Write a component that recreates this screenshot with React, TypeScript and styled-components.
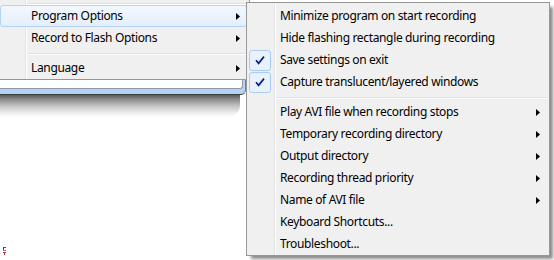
import React from 'react';
import styled, { createGlobalStyle } from 'styled-components';

interface MenuEntry {
  label?: string;
  checked?: boolean;
  sub?: boolean;
  separator?: boolean;
  active?: boolean;
}

const MAIN_MENU: MenuEntry[] = [
  { separator: true },
  { label: 'Program Options', sub: true, active: true },
  { label: 'Record to Flash Options', sub: true },
  { separator: true },
  { label: 'Language', sub: true },
];

const OPTIONS_MENU: MenuEntry[] = [
  { label: 'Minimize program on start recording' },
  { label: 'Hide flashing rectangle during recording' },
  { label: 'Save settings on exit', checked: true },
  { label: 'Capture translucent/layered windows', checked: true },
  { separator: true },
  { label: 'Play AVI file when recording stops', sub: true },
  { label: 'Temporary recording directory', sub: true },
  { label: 'Output directory', sub: true },
  { label: 'Recording thread priority', sub: true },
  { label: 'Name of AVI file', sub: true },
  { label: 'Keyboard Shortcuts...' },
  { label: 'Troubleshoot...' },
];

const MenuList = ({ items, compactFirst }: { items: MenuEntry[]; compactFirst?: boolean }) => (
  <>
    {items.map((item, i) =>
      item.separator ? (
        <Separator key={i} $compact={compactFirst && i === 0} />
      ) : (
        <Row key={i} $active={item.active}>
          <CheckSlot>
            {item.checked && (
              <CheckBox>
                <svg width="22" height="21" viewBox="0 0 22 21">
                  <path d="M7 10.2 L9.6 13.4 L15 6.6" fill="none" stroke="#0d1f8f" strokeWidth="1.7" />
                </svg>
              </CheckBox>
            )}
          </CheckSlot>
          <Label>{item.label}</Label>
          {item.sub && (
            <Arrow width="4" height="7" viewBox="0 0 4 7">
              <polygon points="0,0 4,3.5 0,7" fill="#000" />
            </Arrow>
          )}
        </Row>
      ),
    )}
  </>
);

const App = () => {
  return (
    <Stage>
      <GlobalStyle />
      <BackWindow>
        <WhitePane />
      </BackWindow>
      <WindowShadow />
      <Glyph width="4" height="9" viewBox="0 0 4 9">
        <rect x="0" y="0" width="3" height="1" fill="#3b4a8c" />
        <rect x="0" y="1" width="1" height="2" fill="#3b4a8c" />
        <rect x="0" y="3" width="3" height="1" fill="#6d7bb0" />
        <rect x="0" y="5" width="3" height="1" fill="#c03030" />
        <rect x="1" y="6" width="1" height="2" fill="#c03030" />
      </Glyph>

      <MainMenu>
        <MenuList items={MAIN_MENU} compactFirst />
      </MainMenu>

      <SubMenu>
        <MenuList items={OPTIONS_MENU} />
      </SubMenu>
    </Stage>
  );
};

export default App;

const GlobalStyle = createGlobalStyle`
  html, body {
    margin: 0;
    padding: 0;
    background: #fff;
  }
  body {
    font-family: "Noto Sans", "Liberation Sans", sans-serif;
  }
`;

const Stage = styled.div`
  position: relative;
  width: 554px;
  height: 260px;
  overflow: hidden;
  background: #fff;
`;

const BackWindow = styled.div`
  box-sizing: border-box;
  width: 246px;
  height: 95px;
  background: linear-gradient(to bottom, #c9dff4, #b4d2ef);
  border-bottom: 1px solid #3c3f44;
  border-right: 1px solid #6d7f94;
  border-radius: 0 0 5px 0;
`;

const WhitePane = styled.div`
  box-sizing: border-box;
  width: 243px;
  height: 89px;
  background: #fff;
  border-right: 1px solid #8f9aa6;
  border-bottom: 1px solid #8f9aa6;
  border-radius: 0 0 3px 0;
`;

const WindowShadow = styled.div`
  width: 240px;
  height: 22px;
  background-image: linear-gradient(
    to bottom,
    #5a5a5a 0%,
    #8c8c8c 20%,
    #c4c4c4 50%,
    #ececec 80%,
    #ffffff 100%
  );
  border-radius: 0 0 12px 0;
`;

const Glyph = styled.svg`
  display: block;
  margin: 130px 0 0 3px;
`;

const MenuBox = styled.div`
  position: absolute;
  box-sizing: border-box;
  border: 1px solid #979797;
  font-size: 12px;
  color: #000;
  background:
    linear-gradient(
      to right,
      transparent 27px,
      #e2e3e3 27px,
      #e2e3e3 28px,
      #ffffff 28px,
      #ffffff 29px,
      transparent 29px
    ),
    #f0f0f0;
`;

const MainMenu = styled(MenuBox)`
  left: -3px;
  top: -1px;
  width: 253px;
  padding: 0 2px;
`;

const SubMenu = styled(MenuBox)`
  left: 246px;
  top: 2px;
  width: 304px;
  padding: 2px 2px 0;
  box-shadow: 4px 4px 3px -1px rgba(0, 0, 0, 0.45);
`;

const Row = styled.div<{ $active?: boolean }>`
  box-sizing: border-box;
  display: flex;
  align-items: center;
  height: 22px;
  padding-right: 6px;
  border: 1px solid ${(p) => (p.$active ? '#b4d3f8' : 'transparent')};
  border-radius: 3px;
  background: ${(p) => (p.$active ? 'linear-gradient(to bottom, #f3f8fe, #e4eefb)' : 'transparent')};
`;

const CheckSlot = styled.div`
  flex: none;
  width: 22px;
  height: 21px;
  margin-left: -1px;
`;

const CheckBox = styled.div`
  box-sizing: border-box;
  width: 22px;
  height: 21px;
  border: 1px solid #a9cdf2;
  border-radius: 3px;
  background: #e9f2fc;

  svg {
    display: block;
    margin: -1px 0 0 -1px;
  }
`;

const Label = styled.span`
  flex: 1;
  margin-left: 9px;
  line-height: 20px;
  white-space: nowrap;
  letter-spacing: -0.35px;
`;

const Arrow = styled.svg`
  flex: none;
  display: block;
`;

const Separator = styled.div<{ $compact?: boolean }>`
  height: ${(p) => (p.$compact ? 5 : 8)}px;
  box-sizing: border-box;
  padding-top: ${(p) => (p.$compact ? 3 : 4)}px;
  margin-left: 28px;

  &::before {
    content: '';
    display: block;
    height: 1px;
    background: #e0e0e0;
    border-bottom: 1px solid #fff;
  }
`;
